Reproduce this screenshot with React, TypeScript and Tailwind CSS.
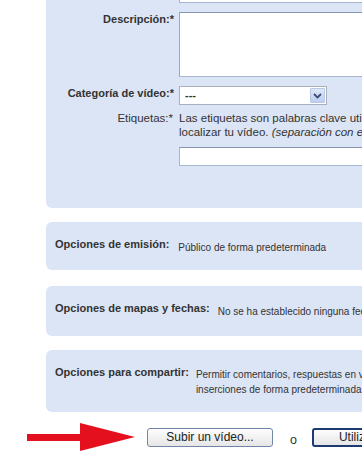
import React from "react";

function Arrow() {
  return (
    <svg width="108" height="28" viewBox="0 0 108 28" className="shrink-0 block">
      <rect x="0" y="11" width="56" height="7" fill="#e5101d" />
      <polygon points="53,0 108,14 53,28" fill="#e5101d" />
    </svg>
  );
}

function Chevron() {
  return (
    <svg width="9" height="6" viewBox="0 0 9 6" className="block">
      <path d="M1 1 L4.5 4.5 L8 1" stroke="#3d4f73" strokeWidth="1.8" fill="none" />
    </svg>
  );
}

export default function App() {
  return (
    <div className="w-[362px] h-[454px] overflow-hidden bg-white font-['Liberation_Sans',Arial,sans-serif] text-[#333]">
      <div className="ml-[46px] w-[340px]">
        {/* Panel 1 */}
        <div className="-mt-[30px] bg-[#dce5f5] rounded-[6px] pt-[13px] pb-[42px] flex flex-col">
          <div className="flex">
            <div className="w-[128px] shrink-0" />
            <div className="ml-[5px] h-[20px] w-[200px] bg-white border border-[#a7b6cf] border-t-[#8595b0]" />
          </div>
          <div className="flex mt-[9px]">
            <div className="w-[128px] shrink-0 text-right text-[11px] font-bold leading-[13px] pt-[1px]">Descripción:*</div>
            <div className="ml-[5px] h-[65px] w-[200px] bg-white border border-[#a7b6cf] border-t-[#8595b0] border-l-[#97a7c0]" />
          </div>
          <div className="flex mt-[9px]">
            <div className="w-[128px] shrink-0 text-right text-[11px] font-bold leading-[13px] pt-[1px]">Categoría de vídeo:*</div>
            <div className="ml-[5px] h-[19px] w-[148px] bg-white border border-[#a9b0bb] flex items-stretch">
              <div className="flex-1 pl-[5px] text-[11px] font-bold leading-[17px]">---</div>
              <div className="w-[15px] m-[1px] bg-gradient-to-b from-[#dfe8f8] to-[#bccdef] border border-[#b8c8e6] rounded-[1px] flex items-center justify-center">
                <Chevron />
              </div>
            </div>
          </div>
          <div className="flex mt-[6px]">
            <div className="w-[128px] shrink-0 text-right text-[11.5px] leading-[14px] pr-[1px]">Etiquetas:*</div>
            <div className="ml-[5px] w-[200px] flex flex-col">
              <div className="text-[11.5px] leading-[14px] whitespace-nowrap">
                Las etiquetas son palabras clave utilizadas para ayudar a
                <br />
                localizar tu vídeo. <i>(separación con espacios)</i>
              </div>
              <div className="mt-[8px] h-[19px] w-[200px] bg-white border border-[#a7b6cf] border-t-[#8595b0]" />
            </div>
          </div>
        </div>

        {/* Panel 2 */}
        <div className="mt-[14px] h-[48px] bg-[#dce5f5] rounded-[6px] pl-[9px] pt-[16px] flex items-start whitespace-nowrap">
          <div className="text-[11px] font-bold leading-[13px]">Opciones de emisión:</div>
          <div className="ml-[9px] mt-[2px] text-[10px] leading-[15px]">Público de forma predeterminada</div>
        </div>

        {/* Panel 3 */}
        <div className="mt-[16px] h-[50px] bg-[#dce5f5] rounded-[6px] pl-[9px] pt-[16px] flex items-start whitespace-nowrap">
          <div className="text-[11px] font-bold leading-[13px]">Opciones de mapas y fechas:</div>
          <div className="ml-[8px] mt-[2px] text-[10px] leading-[15px]">No se ha establecido ninguna fecha ni ubicación</div>
        </div>

        {/* Panel 4 */}
        <div className="mt-[14px] h-[62px] bg-[#dce5f5] rounded-[6px] pl-[9px] pt-[16px] flex items-start whitespace-nowrap">
          <div className="text-[11px] font-bold leading-[13px]">Opciones para compartir:</div>
          <div className="ml-[7px] mt-[1px] text-[10px] leading-[15px]">
            Permitir comentarios, respuestas en vídeo, valoraciones e
            <br />
            inserciones de forma predeterminada
          </div>
        </div>
      </div>

      {/* Buttons row */}
      <div className="mt-[11px] flex items-center whitespace-nowrap">
        <div className="ml-[27px] shrink-0">
          <Arrow />
        </div>
        <button className="ml-[12px] shrink-0 w-[126px] h-[19px] border border-[#6f86a8] rounded-[3px] bg-gradient-to-b from-[#fdfdfd] to-[#e6e6e6] text-[12px] leading-[17px] text-[#222] font-['Liberation_Sans',Arial,sans-serif]">
          Subir un vídeo...
        </button>
        <span className="ml-[17px] mt-[6px] text-[12.5px] leading-[14px] text-[#333]">o</span>
        <button className="ml-[15px] shrink-0 w-[160px] h-[19px] border-2 border-[#1d3b72] rounded-[3px] bg-gradient-to-b from-[#fdfdfd] to-[#e6e6e6] text-[12px] leading-[15px] text-[#222] text-left pl-[25px] font-['Liberation_Sans',Arial,sans-serif]">
          Utilizar la cámara web
        </button>
      </div>
    </div>
  );
}
